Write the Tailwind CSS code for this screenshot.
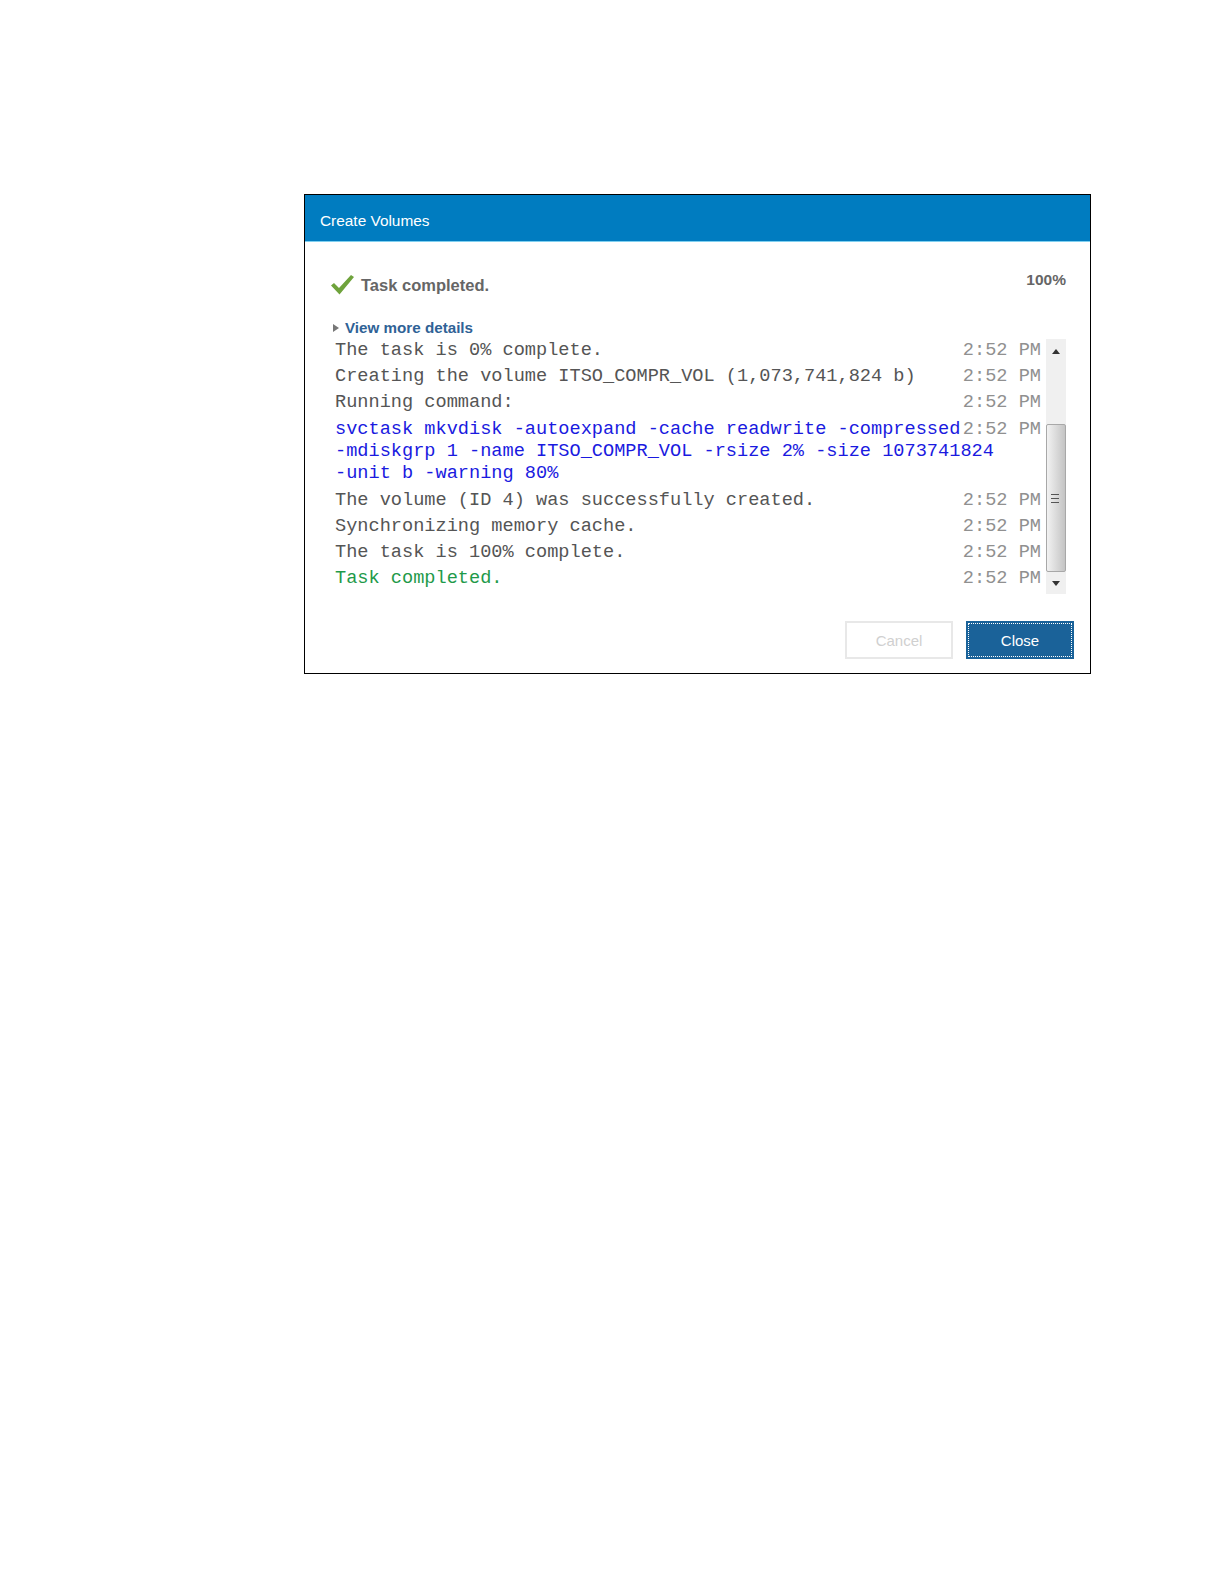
<!DOCTYPE html>
<html lang="en">
<head>
    <meta charset="UTF-8">
    <title>Create Volumes</title>
    <script src="https://cdn.jsdelivr.net/npm/@tailwindcss/browser@4"></script>
</head>
<body class="bg-white min-h-screen font-['Liberation_Sans',sans-serif]">
<div class="pt-[194px] pl-[304px]">
    <!-- Dialog -->
    <div class="w-[787px] h-[480px] border border-black bg-white flex flex-col">
        <div class="h-[47px] shrink-0 bg-[#007cc0] border-b border-[#7fd0f0] flex items-center pl-[15px] pt-[6px] text-white text-[15.4px] font-light">Create Volumes</div>

        <!-- Status -->
        <div class="flex justify-between pl-[25px] pr-[24px] pt-[28px] h-[76px] shrink-0">
            <div class="flex items-start gap-[7px]">
                <svg width="24" height="22" viewBox="0 0 24 22" class="mt-[4px]"><path d="M1 11.5 L4 9 L9 14 L21 1 L24 3 L9.5 20.5 Z" fill="#6fa33c"/></svg>
                <span class="text-[16.5px] font-bold text-[#666666] mt-[5px] leading-[20px]">Task completed.</span>
            </div>
            <span class="text-[15.5px] font-bold text-[#666666] leading-[20px]">100%</span>
        </div>

        <div class="flex items-center pl-[28px] h-[20px] shrink-0">
            <svg width="6" height="8" viewBox="0 0 6 8"><path d="M0 0 L6 4 L0 8 Z" fill="#777777"/></svg>
            <span class="ml-[6px] mt-[1px] text-[15.2px] font-bold text-[#2f6296]">View more details</span>
        </div>

        <!-- Log -->
        <div class="flex pl-[30px] pt-[1px] h-[255px] shrink-0 font-['Liberation_Mono',monospace] text-[18.63px] leading-[22px]">
            <div class="w-[706px] text-[#555555]">
                <div class="flex justify-between h-[26px]"><span>The task is 0% complete.</span><span class="text-[#909090]">2:52 PM</span></div>
                <div class="flex justify-between h-[26px]"><span>Creating the volume ITSO_COMPR_VOL (1,073,741,824 b)</span><span class="text-[#909090]">2:52 PM</span></div>
                <div class="flex justify-between h-[27px]"><span>Running command:</span><span class="text-[#909090]">2:52 PM</span></div>
                <div class="h-[71px] text-[#1a1ae0]">
                    <div class="flex justify-between"><span class="whitespace-pre">svctask mkvdisk -autoexpand -cache readwrite -compressed</span><span class="text-[#909090]">2:52 PM</span></div>
                    <div class="whitespace-pre">-mdiskgrp 1 -name ITSO_COMPR_VOL -rsize 2% -size 1073741824</div>
                    <div class="whitespace-pre">-unit b -warning 80%</div>
                </div>
                <div class="flex justify-between h-[26px]"><span>The volume (ID 4) was successfully created.</span><span class="text-[#909090]">2:52 PM</span></div>
                <div class="flex justify-between h-[26px]"><span>Synchronizing memory cache.</span><span class="text-[#909090]">2:52 PM</span></div>
                <div class="flex justify-between h-[26px]"><span>The task is 100% complete.</span><span class="text-[#909090]">2:52 PM</span></div>
                <div class="flex justify-between h-[22px]"><span class="text-[#1f9a4a]">Task completed.</span><span class="text-[#909090]">2:52 PM</span></div>
            </div>
            <!-- Scrollbar -->
            <div class="w-[20px] ml-[5px] h-[255px] bg-[#f0f0f0] flex flex-col items-center">
                <div class="h-[24px] w-full flex items-center justify-center shrink-0">
                    <svg width="8" height="5" viewBox="0 0 8 5"><path d="M4 0 L8 5 L0 5 Z" fill="#333333"/></svg>
                </div>
                <div class="mt-[61px] h-[148px] w-full rounded-[2px] border border-[#a8a8a8] bg-linear-to-r from-[#f2f2f2] to-[#c4c4c4] flex items-center justify-center shrink-0">
                    <div class="w-[8px] h-[9px] mr-[3px] border-y border-[#555555] flex items-center"><div class="w-full h-px bg-[#555555]"></div></div>
                </div>
                <div class="h-[22px] w-full flex items-center justify-center shrink-0">
                    <svg width="8" height="5" viewBox="0 0 8 5"><path d="M0 0 L8 0 L4 5 Z" fill="#333333"/></svg>
                </div>
            </div>
        </div>

        <!-- Buttons -->
        <div class="flex justify-end gap-[13px] pr-[16px] pt-[28px]">
            <button class="w-[108px] h-[38px] pt-[2px] border-2 border-[#e8e8e8] text-[#d0d0d0] text-[15px]">Cancel</button>
            <button class="w-[108px] h-[38px] bg-[#1a6299] p-[2px] text-white text-[15px]">
                <span class="flex items-center justify-center pt-[2px] w-full h-full border border-dotted border-white">Close</span>
            </button>
        </div>
    </div>
</div>
</body>
</html>
